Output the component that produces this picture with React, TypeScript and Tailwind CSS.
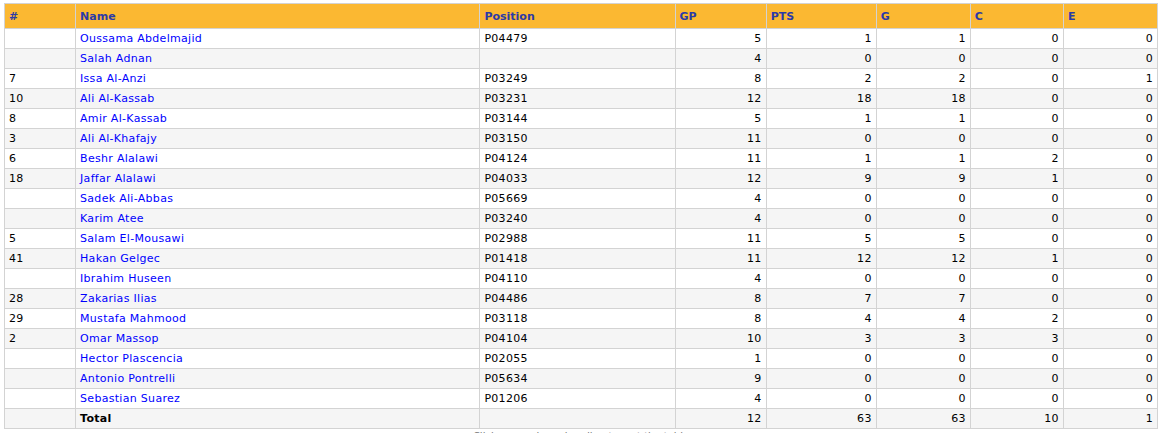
const players = [
  { no: '', name: 'Oussama Abdelmajid', pos: 'P04479', gp: 5, pts: 1, g: 1, c: 0, e: 0 },
  { no: '', name: 'Salah Adnan', pos: '', gp: 4, pts: 0, g: 0, c: 0, e: 0 },
  { no: '7', name: 'Issa Al-Anzi', pos: 'P03249', gp: 8, pts: 2, g: 2, c: 0, e: 1 },
  { no: '10', name: 'Ali Al-Kassab', pos: 'P03231', gp: 12, pts: 18, g: 18, c: 0, e: 0 },
  { no: '8', name: 'Amir Al-Kassab', pos: 'P03144', gp: 5, pts: 1, g: 1, c: 0, e: 0 },
  { no: '3', name: 'Ali Al-Khafajy', pos: 'P03150', gp: 11, pts: 0, g: 0, c: 0, e: 0 },
  { no: '6', name: 'Beshr Alalawi', pos: 'P04124', gp: 11, pts: 1, g: 1, c: 2, e: 0 },
  { no: '18', name: 'Jaffar Alalawi', pos: 'P04033', gp: 12, pts: 9, g: 9, c: 1, e: 0 },
  { no: '', name: 'Sadek Ali-Abbas', pos: 'P05669', gp: 4, pts: 0, g: 0, c: 0, e: 0 },
  { no: '', name: 'Karim Atee', pos: 'P03240', gp: 4, pts: 0, g: 0, c: 0, e: 0 },
  { no: '5', name: 'Salam El-Mousawi', pos: 'P02988', gp: 11, pts: 5, g: 5, c: 0, e: 0 },
  { no: '41', name: 'Hakan Gelgec', pos: 'P01418', gp: 11, pts: 12, g: 12, c: 1, e: 0 },
  { no: '', name: 'Ibrahim Huseen', pos: 'P04110', gp: 4, pts: 0, g: 0, c: 0, e: 0 },
  { no: '28', name: 'Zakarias Ilias', pos: 'P04486', gp: 8, pts: 7, g: 7, c: 0, e: 0 },
  { no: '29', name: 'Mustafa Mahmood', pos: 'P03118', gp: 8, pts: 4, g: 4, c: 2, e: 0 },
  { no: '2', name: 'Omar Massop', pos: 'P04104', gp: 10, pts: 3, g: 3, c: 3, e: 0 },
  { no: '', name: 'Hector Plascencia', pos: 'P02055', gp: 1, pts: 0, g: 0, c: 0, e: 0 },
  { no: '', name: 'Antonio Pontrelli', pos: 'P05634', gp: 9, pts: 0, g: 0, c: 0, e: 0 },
  { no: '', name: 'Sebastian Suarez', pos: 'P01206', gp: 4, pts: 0, g: 0, c: 0, e: 0 },
];

// totals as shown by the source page
const total = { gp: 12, pts: 63, g: 63, c: 10, e: 1 };

const headers = ['#', 'Name', 'Position', 'GP', 'PTS', 'G', 'C', 'E'];
const widths = ['w-[71px]', 'w-[404px]', 'w-[195px]', 'w-[91px]', 'w-[110px]', 'w-[94px]', 'w-[93px]', 'w-[94px]'];

const td = 'border border-[#d3d3d3] px-[4px] py-[3px] leading-[13px] h-[20px] tracking-[0.3px]';
const num = `${td} text-right`;

export default function App() {
  return (
    <div className="bg-white pt-[3px] pl-[4px] font-['DejaVu_Sans',Verdana,sans-serif] text-[11px] text-black">
      <table className="w-[1154px] table-fixed border-collapse">
        <colgroup>
          {widths.map((w, i) => (
            <col key={i} className={w} />
          ))}
        </colgroup>
        <thead>
          <tr className="bg-[#fbb832]">
            {headers.map((h) => (
              <th
                key={h}
                className="border border-[#d3d3d3] px-[4px] pt-[6px] pb-[4px] text-left font-bold leading-[14px] text-[#2b3aa8]"
              >
                {h}
              </th>
            ))}
          </tr>
        </thead>
        <tbody>
          {players.map((p, i) => (
            <tr key={p.name} className={i % 2 === 0 ? 'bg-white' : 'bg-[#f5f5f5]'}>
              <td className={td}>{p.no}</td>
              <td className={`${td} text-[#0000ff]`}>{p.name}</td>
              <td className={td}>{p.pos}</td>
              <td className={num}>{p.gp}</td>
              <td className={num}>{p.pts}</td>
              <td className={num}>{p.g}</td>
              <td className={num}>{p.c}</td>
              <td className={num}>{p.e}</td>
            </tr>
          ))}
          <tr className="bg-[#f5f5f5]">
            <td className={td}></td>
            <td className={`${td} font-bold`}>Total</td>
            <td className={td}></td>
            <td className={num}>{total.gp}</td>
            <td className={num}>{total.pts}</td>
            <td className={num}>{total.g}</td>
            <td className={num}>{total.c}</td>
            <td className={num}>{total.e}</td>
          </tr>
        </tbody>
      </table>
      <p className="w-[1154px] pt-[1px] text-center text-[10px] leading-[13px] text-[#777]">
        Click on a column heading to sort the table
      </p>
    </div>
  );
}
